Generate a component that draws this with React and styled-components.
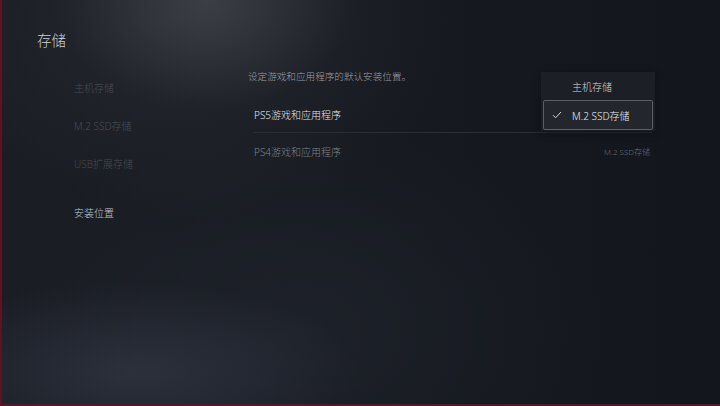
import React from 'react'
import styled, { createGlobalStyle } from 'styled-components'

const GlobalStyle = createGlobalStyle`
  html, body {
    margin: 0;
    padding: 0;
    background: #15181e;
  }
  * {
    box-sizing: border-box;
  }
`

const Screen = styled.div`
  position: relative;
  width: 720px;
  height: 406px;
  overflow: hidden;
  border-left: 2px solid #5a1424;
  border-bottom: 2px solid #5a1424;
  font-family: 'Noto Sans', 'Noto Sans CJK SC', sans-serif;
  font-weight: 300;
  background:
    radial-gradient(ellipse 150px 110px at 205px 0px, rgba(120, 124, 132, 0.28), rgba(120, 124, 132, 0) 100%),
    radial-gradient(ellipse 260px 200px at 190px 20px, rgba(70, 74, 82, 0.26), rgba(70, 74, 82, 0) 100%),
    radial-gradient(ellipse 230px 90px at 130px 372px, rgba(70, 78, 96, 0.38), rgba(70, 78, 96, 0) 100%),
    radial-gradient(ellipse 300px 200px at 300px 330px, rgba(40, 46, 56, 0.35), rgba(40, 46, 56, 0) 100%),
    linear-gradient(90deg, #1a1d24 0%, #171a21 45%, #13161c 100%);
`

const Header = styled.div`
  padding: 31px 0 0 35px;
`

const Title = styled.h1`
  margin: 0;
  font-size: 14.5px;
  line-height: 18px;
  font-weight: 300;
  color: #cfd0d2;
`

const Main = styled.div`
  display: grid;
  grid-template-columns: 72px 174px 407px;
  margin-top: 20px;
`

const Sidebar = styled.nav`
  grid-column: 2;
  display: flex;
  flex-direction: column;
`

const NavItem = styled.div`
  height: 38px;
  line-height: 38px;
  font-size: 10px;
  margin-top: ${props => (props['data-gap'] ? '11px' : '0')};
  color: ${props => (props['data-active'] ? '#c6c7ca' : '#474b53')};
`

const Content = styled.section`
  grid-column: 3;
  position: relative;
`

const Description = styled.p`
  margin: 0 0 11px;
  font-size: 9.6px;
  line-height: 16px;
  color: #9c9fa5;
`

const Rows = styled.div`
  margin-left: 5px;
  margin-right: 3px;
`

const Row = styled.div`
  display: flex;
  align-items: center;
  justify-content: space-between;
  height: 37px;
  padding: 0 2px 0 1px;
  border-bottom: ${props =>
    props['data-divider'] ? '1px solid #2a2d34' : 'none'};
`

const RowLabel = styled.span`
  font-size: 10px;
  color: ${props => (props['data-dim'] ? '#7d8087' : '#e4e4e6')};
`

const RowValue = styled.span`
  font-size: 8px;
  color: #6a6d74;
`

const Dropdown = styled.div`
  position: absolute;
  left: 293px;
  top: 3px;
  width: 114px;
  padding: 0 2px 1px;
  background: #1c1f26;
  box-shadow: 0 2px 8px rgba(0, 0, 0, 0.35);
`

const Option = styled.div`
  display: flex;
  align-items: center;
  height: ${props => (props['data-selected'] ? '30px' : '28px')};
  padding-left: 8px;
  font-size: 10px;
  color: ${props => (props['data-selected'] ? '#ececed' : '#d6d7d9')};
  background: ${props => (props['data-selected'] ? '#23262d' : 'transparent')};
  border: 1px solid ${props => (props['data-selected'] ? '#5b5e65' : 'transparent')};
  border-radius: 2px;
`

const CheckSlot = styled.span`
  display: inline-flex;
  width: 20px;
  justify-content: flex-start;
`

const Check = () => (
  <svg width="10" height="8" viewBox="0 0 10 8" fill="none">
    <path d="M1 4.2 L3.6 6.8 L9 1" stroke="#d8d9db" strokeWidth="1" />
  </svg>
)

const navItems = ['主机存储', 'M.2 SSD存储', 'USB扩展存储']

const App = () => (
  <>
    <GlobalStyle />
    <Screen>
      <Header>
        <Title>存储</Title>
      </Header>
      <Main>
        <Sidebar>
          {navItems.map(item => (
            <NavItem key={item}>{item}</NavItem>
          ))}
          <NavItem data-active data-gap>
            安装位置
          </NavItem>
        </Sidebar>
        <Content>
          <Description>设定游戏和应用程序的默认安装位置。</Description>
          <Rows>
            <Row data-divider>
              <RowLabel>PS5游戏和应用程序</RowLabel>
            </Row>
            <Row>
              <RowLabel data-dim>PS4游戏和应用程序</RowLabel>
              <RowValue>M.2 SSD存储</RowValue>
            </Row>
          </Rows>
          <Dropdown>
            <Option>
              <CheckSlot />
              主机存储
            </Option>
            <Option data-selected>
              <CheckSlot>
                <Check />
              </CheckSlot>
              M.2 SSD存储
            </Option>
          </Dropdown>
        </Content>
      </Main>
    </Screen>
  </>
)

export default App
